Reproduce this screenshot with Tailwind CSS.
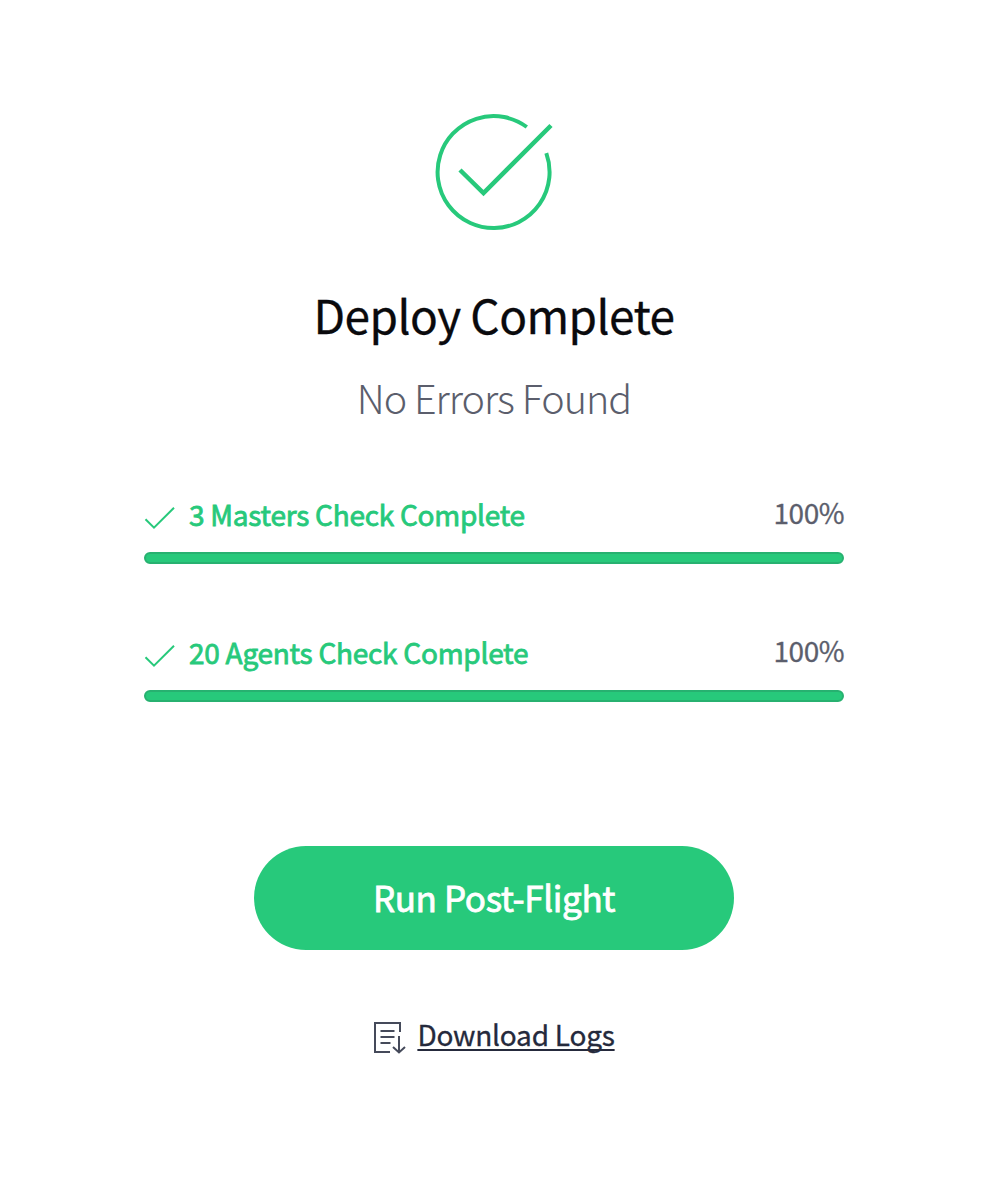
<!DOCTYPE html>
<html lang="en">
<head>
<meta charset="utf-8">
<title>Deploy Complete</title>
<script src="https://cdn.jsdelivr.net/npm/@tailwindcss/browser@4"></script>
</head>
<body class="bg-white font-['Noto_Sans_CJK_SC',sans-serif]">
<main class="flex h-[1200px] w-[988px] flex-col items-center pt-[112px]">
  <svg class="h-[120px] w-[120px] shrink-0" viewBox="0 0 120 120" fill="none" stroke="#27c97b" stroke-width="4"><path d="M92.800 15A56 56 0 1 0 112.300 41.200"/><path d="M26 58l23.500 23L117 13.500" stroke-width="4.500"/></svg>
  <h1 class="mt-[47px] text-[46px] leading-[70px] tracking-[-0.55px] text-[#0a0a0d] whitespace-nowrap [-webkit-text-stroke:0.3px_#0a0a0d]">Deploy Complete</h1>
  <p class="mt-[18px] text-[39.5px] leading-[60px] font-extralight tracking-[-1px] text-[#5b5e6c] whitespace-nowrap">No Errors Found</p>
  <section class="mt-[69px] flex w-[700px] flex-col gap-[70px]">
    <div class="flex h-[68px] flex-col justify-between">
      <div class="flex h-8 items-start text-[28px] leading-8">
        <svg class="mt-2 mr-[13px] h-8 w-8" viewBox="0 0 32 32" fill="none" stroke="#27c97b" stroke-width="2"><path d="M1.500 15.200l8.500 8.500L30 3.700"/></svg>
        <span class="mt-0.5 tracking-[-0.25px] text-[#27c97b] [-webkit-text-stroke:0.8px_#27c97b]">3 Masters Check Complete</span>
        <span class="ml-auto tracking-[-0.5px] text-[#5b5e6c] [-webkit-text-stroke:0.3px_#5b5e6c]">100%</span>
      </div>
      <div class="h-3 rounded-full border-2 border-[#27b170] bg-[#27c97b]"></div>
    </div>
    <div class="flex h-[68px] flex-col justify-between">
      <div class="flex h-8 items-start text-[28px] leading-8">
        <svg class="mt-2 mr-[13px] h-8 w-8" viewBox="0 0 32 32" fill="none" stroke="#27c97b" stroke-width="2"><path d="M1.500 15.200l8.500 8.500L30 3.700"/></svg>
        <span class="mt-0.5 tracking-[-0.25px] text-[#27c97b] [-webkit-text-stroke:0.8px_#27c97b]">20 Agents Check Complete</span>
        <span class="ml-auto tracking-[-0.5px] text-[#5b5e6c] [-webkit-text-stroke:0.3px_#5b5e6c]">100%</span>
      </div>
      <div class="h-3 rounded-full border-2 border-[#27b170] bg-[#27c97b]"></div>
    </div>
  </section>
  <button class="mt-[144px] h-[104px] w-[480px] shrink-0 rounded-full bg-[#27c97b] pb-px text-[35px] tracking-[-0.4px] text-white [-webkit-text-stroke:0.8px_white]">Run Post-Flight</button>
  <a class="mt-[64px] flex items-start gap-3 text-[28px] leading-10 tracking-[-0.23px] text-[#252a3c]">
    <svg class="mt-2 h-8 w-8 overflow-visible" viewBox="0 0 32 32" fill="none" stroke="#454a5a" stroke-width="2"><path d="M17 30H2V1h25v9M7.500 9h14M7.500 15h14M7.500 21h10M26 14v17M20 25l6 5.500 6-5.500"/></svg>
    <span class="underline decoration-2 underline-offset-[3px] [text-decoration-skip-ink:none] [-webkit-text-stroke:0.3px_#252a3c]">Download Logs</span>
  </a>
</main>
</body>
</html>
